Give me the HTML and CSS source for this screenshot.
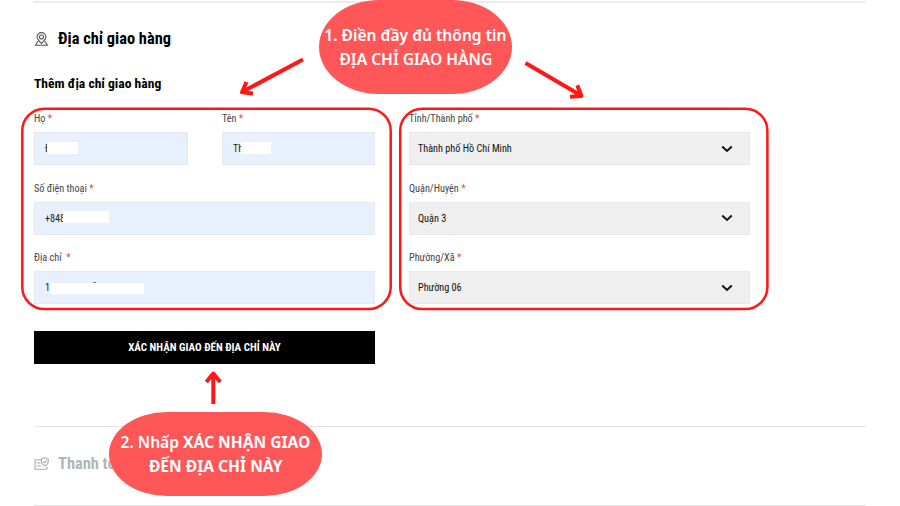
FILE: index.html
```html
<!DOCTYPE html>
<html lang="vi">
<head>
<meta charset="utf-8">
<title>Địa chỉ giao hàng</title>
<link rel="stylesheet" href="styles.css">
</head>
<body>
<main class="page">
  <section class="shipping">
    <h1 class="heading">
      <svg class="heading-icon" viewBox="0 0 14 14" width="14" height="14" fill="none" stroke="#555" stroke-width="1.100">
        <path d="M7 11.500C4.500 9 2.600 7.300 2.600 5a4.400 4.400 0 0 1 8.800 0C11.400 7.300 9.500 9 7 11.500Z"/><circle cx="7" cy="5" r="2"/><path d="M3.500 9.300 1 13.200h12l-2.500-3.900"/>
      </svg>
      <span>Địa chỉ giao hàng</span>
    </h1>
    <h2 class="subheading">Thêm địa chỉ giao hàng</h2>
    <form class="form">
      <div class="column">
        <div class="pair">
          <div class="field"><div class="label">Họ <i>*</i></div><div class="input">Đ<b class="mask mask-last"></b></div></div>
          <div class="field"><div class="label">Tên <i>*</i></div><div class="input">Th<b class="mask mask-first"></b></div></div>
        </div>
        <div class="field"><div class="label">Số điện thoại <i>*</i></div><div class="input">+848<b class="mask mask-phone"></b></div></div>
        <div class="field"><div class="label">Địa chỉ &nbsp;<i>*</i></div><div class="input">1<b class="mask mask-address"></b><b class="accent"></b></div></div>
      </div>
      <div class="column">
        <div class="field"><div class="label">Tỉnh/Thành phố <i>*</i></div><div class="input select">Thành phố Hồ Chí Minh<svg class="chevron" viewBox="0 0 12 8"><path d="m1.200 1.500 4.800 4.500 4.800-4.500"/></svg></div></div>
        <div class="field"><div class="label">Quận/Huyện <i>*</i></div><div class="input select">Quận 3<svg class="chevron" viewBox="0 0 12 8"><path d="m1.200 1.500 4.800 4.500 4.800-4.500"/></svg></div></div>
        <div class="field"><div class="label">Phường/Xã <i>*</i></div><div class="input select">Phường 06<svg class="chevron" viewBox="0 0 12 8"><path d="m1.200 1.500 4.800 4.500 4.800-4.500"/></svg></div></div>
      </div>
    </form>
    <div class="submit">XÁC NHẬN GIAO ĐẾN ĐỊA CHỈ NÀY</div>
  </section>
  <section class="payment">
    <h1 class="heading">
      <svg class="heading-icon" viewBox="0 0 15 14" width="15" height="14" fill="none" stroke="#aaa" stroke-width="1.100">
        <path d="M7 2.800H1v9.400h11.800V9.500M3 6h3.500M3 9h4"/><path d="m10.800.8 3.400 1.300v2.700c0 2-1.600 3.200-3.400 4-1.800-.8-3.400-2-3.400-4V2.100Z"/><path d="m9.200 4.500 1.300 1.300 2.200-2.300"/>
      </svg>
      <span>Thanh toán</span>
    </h1>
  </section>
</main>
<svg class="arrows" viewBox="0 0 900 506" fill="none" stroke="#ff1616" stroke-width="4" stroke-linejoin="round">
  <rect x="22.300" y="108.700" width="368.400" height="200.300" rx="22" stroke-width="2.500"/>
  <rect x="400.200" y="108.700" width="367.200" height="200.300" rx="22" stroke-width="2.500"/>
  <path d="M303 59.500 243 91.500M246.500 82 242 92.200 253 93.500" />
  <path d="M525.500 63 581 95.500M577.300 85.300 581.500 96 570 96.700"/>
  <path d="M213.300 404V374M206.300 382 213.300 373.500 220.300 382"/>
</svg>
<div class="callout callout-fill"><span class="line">1. Điền đầy đủ thông tin</span><span class="line">ĐỊA CHỈ GIAO HÀNG</span></div>
<div class="callout callout-confirm"><span class="line">2. Nhấp <strong>XÁC NHẬN GIAO</strong></span><strong class="line">ĐẾN ĐỊA CHỈ NÀY</strong></div>
</body>
</html>
```

FILE: styles.css
```css
* { box-sizing: border-box; }
body { margin: 0; width: 900px; height: 506px; overflow: hidden; position: relative; background: #fff; font-family: "Roboto Condensed", Roboto, sans-serif; color: #222; }
.page { margin: 1px 34px 0; }
.shipping { height: 425px; border-top: 2px solid #ececec; padding-top: 25px; }
.payment { height: 80px; border-top: 1px solid #e2e2e2; border-bottom: 1px solid #e2e2e2; padding-top: 26px; }
.heading { display: flex; align-items: center; gap: 9px; margin: 0; height: 22px; font-size: 16.400px; line-height: 22px; font-weight: 700; color: #000; }
.payment .heading { color: #b5b5b5; }
.heading-icon { width: 15px; flex: none; }
.subheading { margin: 23px 0 0; height: 20px; font-size: 13.600px; line-height: 20px; font-weight: 700; color: #000; }
.form { display: grid; grid-template-columns: 341px 341px; gap: 34px; margin-top: 19px; }
.column { display: grid; gap: 16.700px; }
.pair { display: grid; grid-template-columns: 154px 153px; justify-content: space-between; }
.field { height: 53px; }
.label { height: 20px; font-size: 10.200px; line-height: 14px; color: #444; }
.label i { font-style: normal; color: #e84a4a; }
.input { position: relative; height: 33px; border: 1px solid #e5e8ef; background: #e8effd; padding: 0 10px; font-size: 10.200px; line-height: 31px; }
.select { display: flex; align-items: center; justify-content: space-between; background: #efefef; border-color: #e9e9e9; padding: 0 16px 0 8px; color: #111; }
.chevron { width: 12px; height: 8px; fill: none; stroke: #111; stroke-width: 2; }
.mask { position: absolute; height: 12px; top: 9px; background: #fff; }
.mask-last { left: 12px; width: 31px; }
.mask-first { left: 18px; width: 30px; }
.mask-phone { left: 28px; top: 8px; width: 46px; height: 12px; }
.mask-address { left: 15px; top: 11px; width: 94px; height: 11px; }
.accent { position: absolute; left: 58px; top: 10px; width: 3px; height: 1px; background: #778; }
.submit { width: 341px; height: 33px; margin-top: 27px; background: #000; color: #fff; font-weight: 700; font-size: 11px; line-height: 33px; text-align: center; }
.arrows { position: absolute; inset: 0; width: 900px; height: 506px; }
.callout { position: absolute; display: flex; flex-direction: column; align-items: center; justify-content: center; background: #ff5757; color: #fff; font: 600 16.500px/24px "Noto Sans", sans-serif; }
.callout .line { white-space: nowrap; transform: scaleX(.945); }
.callout strong { font-weight: 700; }
.callout-fill { left: 319px; top: 0; width: 193px; height: 94px; border-radius: 60px / 47px; }
.callout-confirm { left: 109px; top: 412px; width: 213px; height: 84px; border-radius: 58px / 42px; padding-bottom: 1px; }
```
